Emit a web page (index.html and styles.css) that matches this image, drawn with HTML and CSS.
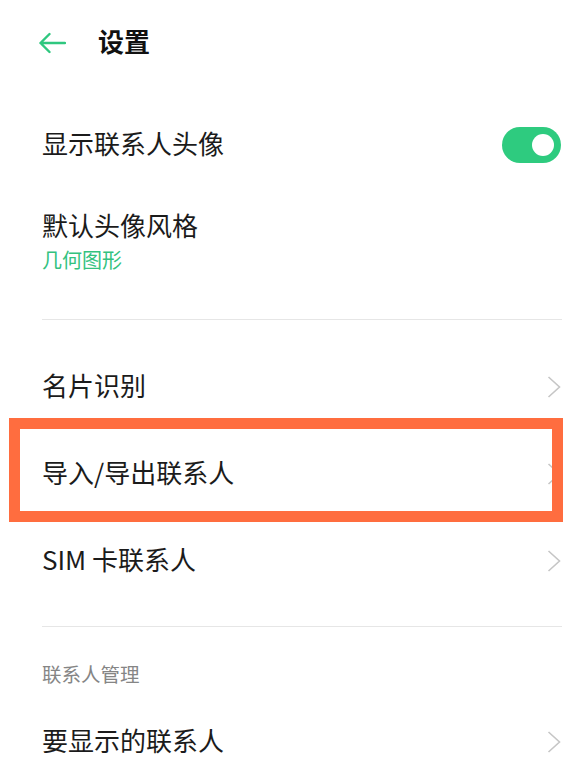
FILE: index.html
```html
<!DOCTYPE html>
<html lang="zh-CN">
<head>
<meta charset="utf-8">
<title>设置</title>
<link rel="stylesheet" href="styles.css">
</head>
<body>
<div class="page">
  <header class="topbar">
    <svg class="back" width="28" height="22" viewBox="0 0 28 22" aria-hidden="true">
      <path d="M27 11 H2.5 M11.5 2 L2.5 11 L11.5 20" fill="none" stroke="#2fc77f" stroke-width="2.4" stroke-linecap="round" stroke-linejoin="round"/>
    </svg>
    <h1 class="title">设置</h1>
  </header>

  <div class="row row-first">
    <span class="label">显示联系人头像</span>
    <span class="toggle"><span class="knob"></span></span>
  </div>

  <div class="row-two">
    <div class="label">默认头像风格</div>
    <div class="sub">几何图形</div>
  </div>

  <div class="divider"></div>

  <div class="group">
    <div class="row">
      <span class="label">名片识别</span>
      <svg class="chev" width="14" height="22" viewBox="0 0 14 22" aria-hidden="true"><polyline points="1.5,1 12.5,11 1.5,21" fill="none" stroke="#c6c6c6" stroke-width="1.6"/></svg>
    </div>
    <div class="row">
      <span class="label">导入/导出联系人</span>
      <svg class="chev" width="14" height="22" viewBox="0 0 14 22" aria-hidden="true"><polyline points="1.5,1 12.5,11 1.5,21" fill="none" stroke="#c6c6c6" stroke-width="1.6"/></svg>
    </div>
    <div class="row">
      <span class="label">SIM 卡联系人</span>
      <svg class="chev" width="14" height="22" viewBox="0 0 14 22" aria-hidden="true"><polyline points="1.5,1 12.5,11 1.5,21" fill="none" stroke="#c6c6c6" stroke-width="1.6"/></svg>
    </div>
  </div>

  <div class="divider divider-2"></div>

  <div class="section">联系人管理</div>

  <div class="row row-last">
    <span class="label">要显示的联系人</span>
    <svg class="chev" width="14" height="22" viewBox="0 0 14 22" aria-hidden="true"><polyline points="1.5,1 12.5,11 1.5,21" fill="none" stroke="#c6c6c6" stroke-width="1.6"/></svg>
  </div>

  <div class="highlight"></div>
</div>
</body>
</html>
```

FILE: styles.css
```css
html, body {
  margin: 0;
  padding: 0;
  background: #ffffff;
}

body {
  font-family: "Noto Sans CJK SC", "Noto Sans", "Liberation Sans", sans-serif;
  color: #1b1b1b;
}

.page {
  position: relative;
  width: 586px;
  height: 772px;
  overflow: hidden;
}

.topbar {
  height: 86px;
  display: flex;
  align-items: center;
  padding-left: 38px;
  gap: 32px;
}

.back {
  display: block;
  flex: none;
}

.title {
  margin: 0;
  padding-bottom: 4px;
  font-size: 26px;
  font-weight: 700;
  line-height: 36px;
  color: #111111;
}

.row {
  height: 87px;
  display: flex;
  align-items: center;
  justify-content: space-between;
  padding: 0 25px 0 42px;
}

.row-first {
  margin-top: 16px;
  height: 86px;
}

.label {
  font-size: 26px;
  line-height: 36px;
  white-space: nowrap;
}

.row .label {
  padding-bottom: 4px;
}

.toggle {
  width: 59px;
  height: 36px;
  border-radius: 18px;
  background: #2ecb7f;
  display: flex;
  align-items: center;
  justify-content: flex-end;
  padding-right: 7px;
  box-sizing: border-box;
}

.knob {
  width: 22px;
  height: 22px;
  border-radius: 50%;
  background: #ffffff;
}

.row-two {
  height: 131px;
  box-sizing: border-box;
  padding: 19px 25px 0 42px;
}

.sub {
  margin-top: 3px;
  font-size: 20px;
  line-height: 28px;
  color: #33c27f;
}

.divider {
  height: 1px;
  background: #e6e6e6;
  margin: 0 24px 0 42px;
}

.group {
  padding-top: 23px;
}

.divider-2 {
  margin-top: 22px;
}

.section {
  margin-top: 33px;
  padding-left: 42px;
  font-size: 19.5px;
  line-height: 28px;
  color: #858585;
}

.row-last {
  margin-top: 10px;
}

.chev {
  display: block;
  flex: none;
}

.highlight {
  position: absolute;
  left: 9px;
  top: 418px;
  width: 554px;
  height: 104px;
  box-sizing: border-box;
  border: 11px solid #ff6d3f;
}
```
